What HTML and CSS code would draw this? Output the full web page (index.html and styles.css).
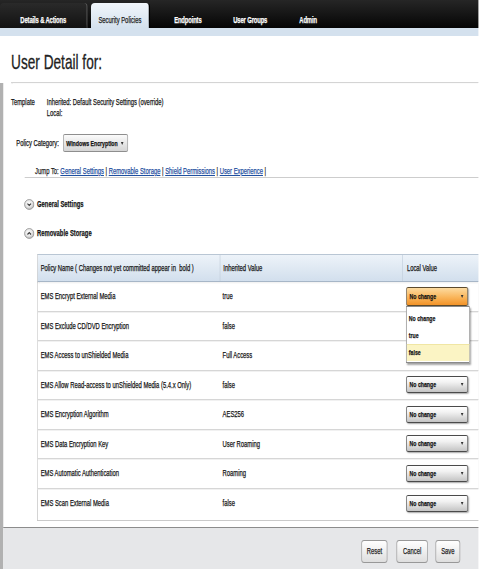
FILE: index.html
```html
<!DOCTYPE html>
<html lang="en">
<head>
  <meta charset="UTF-8">
  <meta name="viewport" content="width=device-width, initial-scale=1.0">
  <title>User Detail</title>
  <link rel="stylesheet" href="styles.css">
</head>
<body>

 <div class="frame">
  <div class="page">

    <div class="topnav">
      <a class="tab tab-first" href="#">Details &amp; Actions</a>
      <a class="tab tab-active" href="#">Security Policies</a>
      <a class="tab tab-endpoints" href="#">Endpoints</a>
      <a class="tab tab-groups" href="#">User Groups</a>
      <a class="tab tab-admin" href="#">Admin</a>
    </div>
    <div class="subbar"></div>

    <h1 class="title">User Detail for:</h1>

    <div class="main">

      <div class="template">
        <div class="template-label">Template</div>
        <div class="template-values">
          <div>Inherited: Default Security Settings (override)</div>
          <div>Local:</div>
        </div>
      </div>

      <div class="category">
        <span class="category-label">Policy Category:</span>
        <div class="picker picker-grey">Windows Encryption <span class="arrow"></span></div>
      </div>

      <div class="jump">
        Jump To:
        <a href="#">General Settings</a> |
        <a href="#">Removable Storage</a> |
        <a href="#">Shield Permissions</a> |
        <a href="#">User Experience</a> |
      </div>

      <div class="section">
        <svg class="toggle" viewBox="0 0 10 10" preserveAspectRatio="none">
          <defs>
            <radialGradient id="knob" cx="0.45" cy="0.4" r="0.6">
              <stop offset="0" stop-color="#ffffff"/>
              <stop offset="0.6" stop-color="#e6e6e6"/>
              <stop offset="1" stop-color="#b3b3b3"/>
            </radialGradient>
          </defs>
          <circle cx="5" cy="5" r="4.5" fill="url(#knob)" stroke="#8a8a8a" stroke-width="0.7"/>
          <polyline points="3.3,4.2 5,5.9 6.7,4.2" fill="none" stroke="#3a3a3a" stroke-width="1.1"/>
        </svg>
        General Settings
      </div>

      <div class="section">
        <svg class="toggle" viewBox="0 0 10 10" preserveAspectRatio="none">
          <circle cx="5" cy="5" r="4.5" fill="url(#knob)" stroke="#8a8a8a" stroke-width="0.7"/>
          <polyline points="3.3,5.9 5,4.2 6.7,5.9" fill="none" stroke="#3a3a3a" stroke-width="1.1"/>
        </svg>
        Removable Storage
      </div>

      <div class="policy-box">
        <div class="prow prow-head">
          <div class="pcell">Policy Name ( Changes not yet committed appear in &nbsp;bold )</div>
          <div class="pcell">Inherited Value</div>
          <div class="pcell">Local Value</div>
        </div>

        <div class="prow">
          <div class="pcell">EMS Encrypt External Media</div>
          <div class="pcell">true</div>
          <div class="pcell">
            <div class="combo">
              <div class="picker picker-open">No change <span class="arrow"></span></div>
              <ul class="options">
                <li>No change</li>
                <li>true</li>
                <li class="hover">false</li>
              </ul>
            </div>
          </div>
        </div>

        <!-- the next two pickers sit under the open list -->
        <div class="prow">
          <div class="pcell">EMS Exclude CD/DVD Encryption</div>
          <div class="pcell">false</div>
          <div class="pcell"></div>
        </div>

        <div class="prow">
          <div class="pcell">EMS Access to unShielded Media</div>
          <div class="pcell">Full Access</div>
          <div class="pcell"></div>
        </div>

        <div class="prow">
          <div class="pcell">EMS Allow Read-access to unShielded Media (5.4.x Only)</div>
          <div class="pcell">false</div>
          <div class="pcell"><div class="picker">No change <span class="arrow"></span></div></div>
        </div>

        <div class="prow">
          <div class="pcell">EMS Encryption Algorithm</div>
          <div class="pcell">AES256</div>
          <div class="pcell"><div class="picker">No change <span class="arrow"></span></div></div>
        </div>

        <div class="prow">
          <div class="pcell">EMS Data Encryption Key</div>
          <div class="pcell">User Roaming</div>
          <div class="pcell"><div class="picker">No change <span class="arrow"></span></div></div>
        </div>

        <div class="prow">
          <div class="pcell">EMS Automatic Authentication</div>
          <div class="pcell">Roaming</div>
          <div class="pcell"><div class="picker">No change <span class="arrow"></span></div></div>
        </div>

        <div class="prow">
          <div class="pcell">EMS Scan External Media</div>
          <div class="pcell">false</div>
          <div class="pcell"><div class="picker">No change <span class="arrow"></span></div></div>
        </div>
      </div>

      <div class="footer">
        <button class="btn btn-reset">Reset</button>
        <button class="btn btn-cancel">Cancel</button>
        <button class="btn btn-save">Save</button>
      </div>

    </div>
  </div>
 </div>

</body>
</html>
```

FILE: styles.css
```css
html, body {
  margin: 0;
  padding: 0;
}

body {
  background: #fff;
  overflow: hidden;
  font-family: "Liberation Sans", Arial, sans-serif;
  font-size: 9px;
  color: #141414;
  -webkit-text-stroke: 0.25px currentColor;
}

.frame {
  width: 479px;
  height: 569px;
  overflow: hidden;
}

/* the console is laid out wide and squeezed to the window, like the old narrow-font UI */
.page {
  width: 736px;
  transform: scaleX(0.65);
  transform-origin: 0 0;
}

/* ---------- top tabs ---------- */

.topnav {
  height: 28px;
  padding-top: 3px;
  box-sizing: border-box;
  display: flex;
  background: linear-gradient(#262626, #050505);
}

.tab {
  height: 25px;
  box-sizing: border-box;
  padding-top: 11px;
  line-height: 12px;
  text-align: center;
  color: #fff;
  font-weight: bold;
  letter-spacing: -0.2px;
  text-decoration: none;
  border-radius: 6px 6px 0 0 / 4px 4px 0 0;
}

.tab-first {
  width: 135px;
  background: linear-gradient(#2a2a2a, #121212);
  border-right: 2px solid #595959;
}

.tab-active {
  width: 91px;
  margin-left: 5px;
  color: #1c1c1c;
  font-weight: normal;
  letter-spacing: 0;
  background: linear-gradient(#f1f6fb, #d4e1ee);
  border-right: 2px solid #000;
}

.tab-endpoints {
  width: 96px;
  margin-left: 10px;
}

.tab-groups {
  width: 96px;
}

.tab-admin {
  width: 82px;
}

.subbar {
  height: 8px;
  background: #d4e1ee;
}

/* ---------- heading ---------- */

.title {
  margin: 0 0 0 17px;
  padding: 13px 0 7px;
  font-size: 21px;
  line-height: 26px;
  font-weight: normal;
  color: #222;
  -webkit-text-stroke: 0.3px currentColor;
  border-bottom: 1px solid #d4d4d4;
  box-shadow: 0 1px 1px #efefef;
}

.main {
  border-left: 5px solid #b1b1b1;
}

.template {
  display: flex;
  padding: 14px 0 0 12px;
  line-height: 11px;
}

.template-label {
  width: 55px;
}

.category {
  display: flex;
  align-items: center;
  margin-top: 15px;
  padding-left: 20px;
}

.category-label {
  width: 72px;
}

/* ---------- fake select boxes ---------- */

.picker {
  display: flex;
  align-items: center;
  box-sizing: border-box;
  width: 95px;
  height: 17px;
  padding: 0 6px 0 4px;
  font-size: 8px;
  font-weight: bold;
  color: #111;
  background: linear-gradient(#ffffff, #f2f2f2 35%, #c4c4c4);
  border: 1px solid #4a4a4a;
  border-width: 1px 1.5px;
  border-radius: 3px / 2px;
  box-shadow: 1.5px 1px 2px rgba(0, 0, 0, 0.35);
}

.picker .arrow {
  margin-left: auto;
  width: 0;
  height: 0;
  border-left: 2.5px solid transparent;
  border-right: 2.5px solid transparent;
  border-top: 3px solid #333;
}

.picker-grey {
  width: 100px;
  height: 18px;
  background: linear-gradient(#fbfbfb, #d5d5d5);
  border-color: #8e8e8e;
  box-shadow: none;
}

.picker-open {
  height: 19px;
  background: linear-gradient(#fddba0, #f9b55a 55%, #f39328);
  border-color: #5d4a2c;
}

.combo {
  position: relative;
}

.options {
  position: absolute;
  top: 100%;
  left: 0;
  z-index: 2;
  width: 98px;
  box-sizing: border-box;
  margin: 0;
  padding: 3px 0 1px;
  list-style: none;
  background: #fff;
  border: 1px solid #8a8a8a;
  border-width: 1px 1.5px;
  box-shadow: 1.5px 2px 2px rgba(0, 0, 0, 0.35);
}

.options li {
  height: 17px;
  line-height: 17px;
  padding-left: 3px;
  font-size: 8px;
  font-weight: bold;
}

.options li.hover {
  background: #fbf4c4;
  border-top: 1px solid #f0e6a4;
  height: 16px;
  line-height: 16px;
}

/* ---------- jump links + sections ---------- */

.jump {
  margin: 13px 0 0 33px;
  padding-left: 16px;
  line-height: 12px;
  color: #1d1d1d;
  border-bottom: 1px solid #cdcdcd;
}

.jump a {
  color: #1f4f9f;
}

.section {
  display: flex;
  align-items: center;
  height: 14px;
  margin-top: 19px;
  padding-left: 32px;
  font-weight: bold;
}

.section + .section {
  margin-top: 15px;
}

.toggle {
  width: 16px;
  height: 11px;
  margin-right: 4px;
}

/* ---------- policy table ---------- */

.policy-box {
  margin: 14px 0 0 52px;
  padding-bottom: 2px;
  border-left: 1.5px solid #bdbdbd;
  border-bottom: 1px solid #cacaca;
}

.prow {
  display: grid;
  grid-template-columns: 280px 281px 1fr;
  align-items: center;
  height: 29.5px;
  box-sizing: border-box;
  border-bottom: 1px solid #d6d6d6;
  box-shadow: 0 1px 0 #f1f1f1;
}

.prow:last-child {
  border-bottom: 0;
  box-shadow: none;
}

.pcell {
  padding-left: 4.5px;
  white-space: nowrap;
}

.pcell:last-child {
  padding-left: 6px;
}

.prow-head {
  height: 28px;
  align-items: stretch;
  background: linear-gradient(#edf3f9, #d2dfed);
  border-top: 1px solid #b9c6d4;
  border-bottom: 1px solid #a7b6c7;
  box-shadow: 0 1px 2px rgba(0, 0, 0, 0.15);
}

.prow-head .pcell {
  display: flex;
  align-items: center;
}

.prow-head .pcell + .pcell {
  border-left: 1.5px solid #c2cedb;
}

/* ---------- footer buttons ---------- */

.footer {
  display: flex;
  justify-content: flex-end;
  margin-top: 6px;
  padding: 11.5px 28px 6px 0;
  background: #e6e7e9;
  border-top: 1.5px solid #8c8c8c;
}

.btn {
  height: 23px;
  padding: 0;
  font-family: "Liberation Sans", Arial, sans-serif;
  font-size: 9px;
  color: #222;
  -webkit-text-stroke: 0.25px currentColor;
  background: linear-gradient(#ffffff, #dedede);
  border: 1px solid #989898;
  border-width: 1px 1.5px;
  border-radius: 4px / 3px;
}

.btn-reset {
  width: 40px;
}

.btn-cancel {
  width: 48px;
  margin-left: 14px;
}

.btn-save {
  width: 38px;
  margin-left: 12px;
}
```
